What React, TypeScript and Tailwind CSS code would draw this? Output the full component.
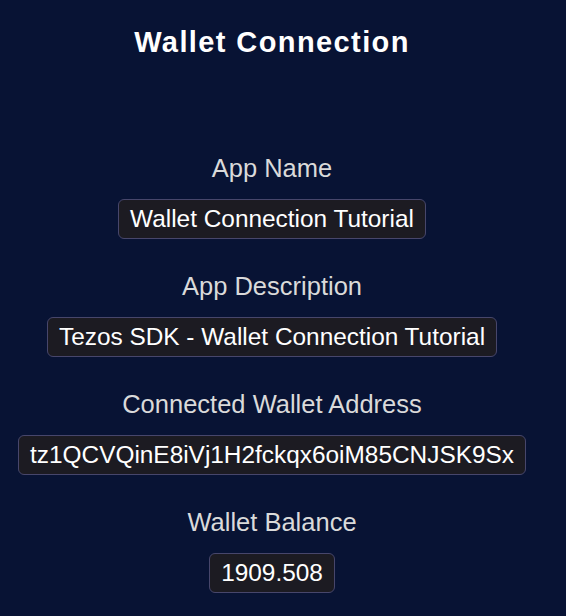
const fields = [
  { label: "App Name", value: "Wallet Connection Tutorial" },
  { label: "App Description", value: "Tezos SDK - Wallet Connection Tutorial" },
  { label: "Connected Wallet Address", value: "tz1QCVQinE8iVj1H2fckqx6oiM85CNJSK9Sx" },
  { label: "Wallet Balance", value: "1909.508" },
]

export default function App() {
  return (
    <div className="min-h-screen bg-[#081334] font-['Liberation_Sans',sans-serif]">
      <div className="w-[544px] flex flex-col items-center">
        <h1 className="mt-[25px] text-[29px] leading-[34px] font-bold tracking-[1.4px] text-white">
          Wallet Connection
        </h1>
        <div className="mt-[95px] flex flex-col items-center gap-[33px]">
          {fields.map((f) => (
            <div key={f.label} className="flex flex-col items-center gap-[17px]">
              <div className="text-[25.5px] leading-[28px] text-[#dadada]">{f.label}</div>
              <div className="rounded-[6px] border border-[#47466b] bg-[#1c1b22] px-[11px] py-[5px] text-[24.4px] leading-[28px] text-white">
                {f.value}
              </div>
            </div>
          ))}
        </div>
      </div>
    </div>
  )
}
